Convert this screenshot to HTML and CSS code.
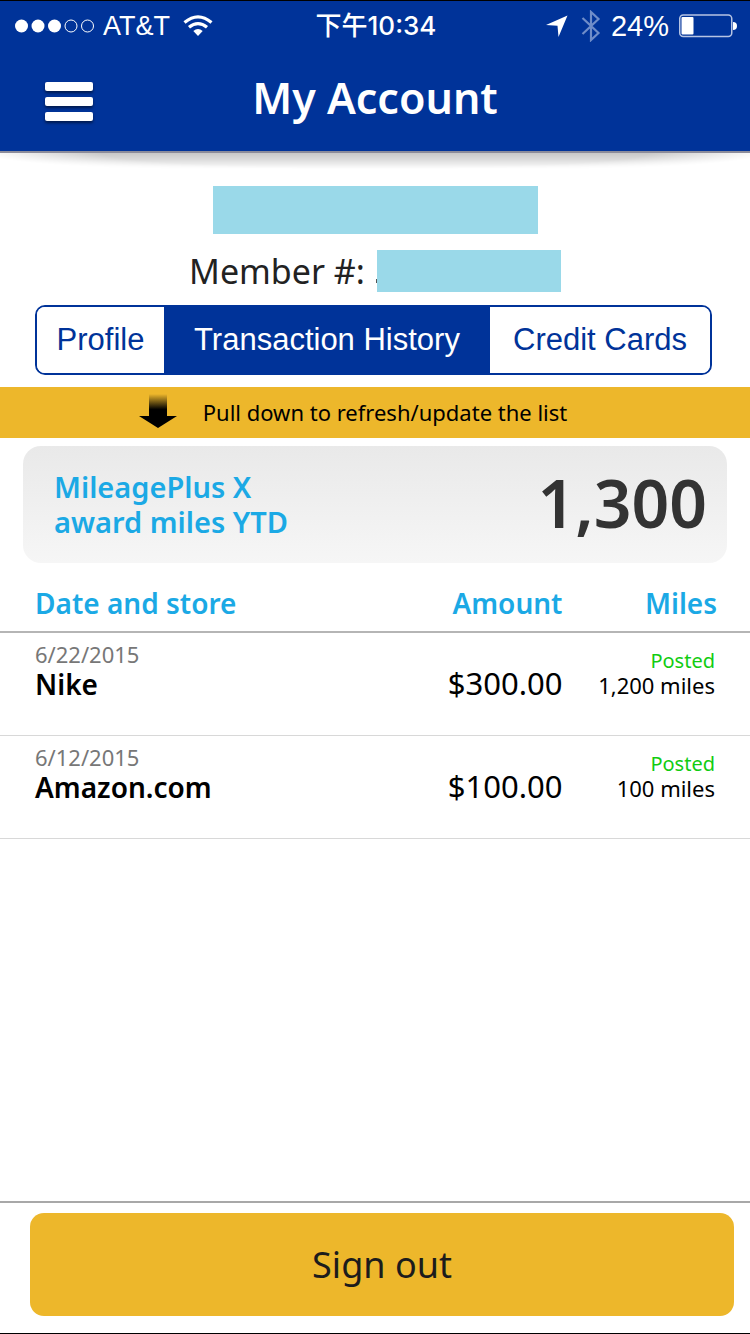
FILE: index.html
```html
<!DOCTYPE html>
<html lang="en">
<head>
<meta charset="utf-8">
<meta name="viewport" content="width=device-width, initial-scale=1">
<title>My Account</title>
<link rel="stylesheet" href="styles.css">
</head>
<body>
<div class="app">
  <header class="top">
    <div class="status">
      <div class="status-side">
        <svg class="signal" width="80" height="16" viewBox="0 0 80 16" aria-hidden="true">
          <g fill="#fff"><circle cx="6.500" cy="8" r="6.500"/><circle cx="23" cy="8" r="6.500"/><circle cx="39.500" cy="8" r="6.500"/></g>
          <g fill="none" stroke="#fff" stroke-width="1"><circle cx="56" cy="8" r="6"/><circle cx="72.500" cy="8" r="6"/></g>
        </svg>
        <span class="carrier">AT&amp;T</span>
        <svg width="30" height="22" viewBox="0 0 30 22" aria-hidden="true">
          <g fill="none" stroke="#fff" stroke-width="3.200"><path d="M1.500 7.500Q15-3.800 28.500 7.500"/><path d="M6 12.300Q15 5 24 12.300"/></g>
          <path d="M10.300 16Q15 12 19.700 16L15 21Z" fill="#fff"/>
        </svg>
      </div>
      <time class="clock">下午10:34</time>
      <div class="status-side status-right">
        <svg width="22" height="22" viewBox="0 0 22 22" aria-hidden="true"><path d="M21.500.5L12.500 22L11.500 10.800L0 10Z" fill="#fff"/></svg>
        <svg class="bluetooth" width="20" height="32" viewBox="0 0 20 32" aria-hidden="true"><path d="M1.500 8L17.500 23L10 30V2L17.500 9L1.500 24" fill="none" stroke="#6f8dc9" stroke-width="2.200"/></svg>
        <span class="percent">24%</span>
        <svg width="58" height="24" viewBox="0 0 58 24" aria-hidden="true">
          <rect x=".75" y="1" width="52" height="21.500" rx="3.500" fill="none" stroke="#b6c4e3" stroke-width="1.500"/>
          <rect x="2.500" y="3" width="12" height="17.500" rx="1" fill="#fff"/>
          <path d="M54 8Q58 8 58 12T54 16Z" fill="#fff"/>
        </svg>
      </div>
    </div>
    <div class="title-bar">
      <button class="menu" type="button" aria-label="Menu"><span></span><span></span><span></span></button>
      <h1 class="title">My Account</h1>
    </div>
  </header>
  <main class="main">
    <section class="member">
      <div class="mask mask-name"></div>
      <div class="member-line"><span>Member #:</span><span class="speck"></span><span class="mask mask-number"></span></div>
    </section>
    <nav class="tabs">
      <button class="tab" type="button">Profile</button>
      <button class="tab tab-active" type="button" aria-current="page">Transaction History</button>
      <button class="tab" type="button">Credit Cards</button>
    </nav>
    <div class="refresh">
      <svg width="38" height="36" viewBox="0 0 38 36" aria-hidden="true">
        <defs><linearGradient id="fade" x1="0" y1="0" x2="0" y2="1"><stop offset="0" stop-opacity="0"/><stop offset=".45"/></linearGradient></defs>
        <path d="M10 0H28V22H38L19 34L0 22H10Z" fill="url(#fade)"/>
      </svg>
      <span>Pull down to refresh/update the list</span>
    </div>
    <section class="summary">
      <p class="summary-label">MileagePlus X<br>award miles YTD</p>
      <p class="summary-value">1,300</p>
    </section>
    <table class="history">
      <thead><tr><th class="store">Date and store</th><th class="amount">Amount</th><th class="miles">Miles</th></tr></thead>
      <tbody>
        <tr><td class="store"><span class="date">6/22/2015</span><span class="name">Nike</span></td><td class="amount">$300.00</td><td class="miles"><span class="posted">Posted</span><span class="count">1,200 miles</span></td></tr>
        <tr><td class="store"><span class="date">6/12/2015</span><span class="name">Amazon.com</span></td><td class="amount">$100.00</td><td class="miles"><span class="posted">Posted</span><span class="count">100 miles</span></td></tr>
      </tbody>
    </table>
  </main>
  <footer class="footer"><button class="sign-out" type="button">Sign out</button></footer>
</div>
</body>
</html>
```
FILE: styles.css
```css
* { box-sizing: border-box; }
body { margin: 0; background: #fff; color: #000; font-family: "Noto Sans", "Noto Sans CJK TC", sans-serif; }
button { font: inherit; cursor: pointer; }
.app { min-height: 100vh; display: flex; flex-direction: column; border-top: 1px solid #000; border-bottom: 1px solid #000; }

.top { position: relative; background: #039; color: #fff; border-bottom: 2px solid #8c8c9a; }
.top::after { content: ""; position: absolute; left: 0; right: 0; top: calc(100% + 2px); height: 16px; background: linear-gradient(rgba(0,0,0,.22), rgba(0,0,0,.14) 40%, transparent); -webkit-mask-image: radial-gradient(52% 130% at 50% 0, #000 70%, transparent); mask-image: radial-gradient(52% 130% at 50% 0, #000 70%, transparent); }
.status { height: 50px; padding: 0 13px 0 15px; display: grid; grid-template-columns: 1fr auto 1fr; align-items: center; font-family: "Liberation Sans", "Noto Sans CJK TC", sans-serif; font-size: 29px; line-height: 32px; }
.status-side { display: flex; align-items: center; gap: 8px; }
.status-side svg { flex: none; }
.carrier { margin-right: 5px; font-size: 27px; }
.status-right { justify-content: flex-end; gap: 10px; }
.bluetooth { margin-left: 3px; }
.clock { font-family: "Inter", "Noto Sans CJK TC", sans-serif; font-size: 26px; font-weight: 500; }
.title-bar { height: 100px; display: grid; grid-template-columns: 1fr auto 1fr; align-items: center; padding: 0 45px 4px; }
.menu { width: 48px; padding: 4px 0 0; border: 0; background: none; display: grid; gap: 6px; }
.menu span { height: 9px; border-radius: 2px; background: #fff; box-shadow: 0 2px 3px rgba(0,0,0,.5); }
.title { margin: 0; padding-bottom: 2px; font-size: 43px; line-height: 60px; font-weight: 600; }

.main { flex: 1; }
.member { padding-top: 33px; display: flex; flex-direction: column; align-items: center; gap: 16px; }
.mask { background: #9ad9e9; }
.mask-name { width: 325px; height: 48px; }
.member-line { display: flex; align-items: center; font-size: 34px; line-height: 42px; color: #222; }
.mask-number { width: 184px; height: 42px; }
.speck { width: 1px; height: 4px; margin: 20px 0 0 11px; background: #555; }
.tabs { margin: 13px 38px 12px 35px; height: 70px; border: 2px solid #039; border-radius: 10px; display: grid; grid-template-columns: 127fr 326fr 220fr; overflow: hidden; }
.tab { border: 0; padding: 0; background: #fff; color: #039; font-family: "Liberation Sans", sans-serif; font-size: 31px; white-space: nowrap; }
.tab-active { background: #039; color: #fff; }
.refresh { height: 51px; padding: 0 44px 2px 0; background: #edb72b; display: flex; align-items: center; justify-content: center; gap: 26px; font-size: 22px; line-height: 30px; }
.summary { margin: 8px 23px 0; height: 117px; padding: 0 20px 2px 31px; border-radius: 18px; background: linear-gradient(#e9e9e9, #f6f6f6); display: flex; align-items: center; justify-content: space-between; }
.summary p { margin: 0; font-weight: 600; }
.summary .summary-label { color: #1ba9e5; font-size: 29px; line-height: 35px; }
.summary .summary-value { color: #333; font-size: 66px; line-height: 80px; padding-bottom: 4px; }

.history { width: 100%; border-collapse: separate; border-spacing: 0; table-layout: fixed; }
.history th { height: 70px; padding: 12px 0 0; color: #1ba9e5; font-size: 28px; line-height: 36px; font-weight: 600; border-bottom: 2px solid #b5b5b5; }
.history td { height: 103px; padding: 0; border-bottom: 1px solid #d8d8d8; vertical-align: top; }
.history .store { width: 50%; padding-left: 35px; text-align: left; }
.history .amount { width: 25%; text-align: right; }
.history .miles { padding-right: 35px; text-align: right; }
.history th.miles { padding-right: 33px; }
.history td span { display: block; }
.history td.store { padding-top: 8px; }
.history td.amount { padding-top: 32px; font-size: 31px; line-height: 36px; }
.history td.miles { padding-top: 16px; }
.date { color: #777; font-size: 22px; line-height: 26px; }
.name { font-size: 28px; line-height: 34px; font-weight: 600; }
.posted { color: #1c1; font-size: 20px; line-height: 24px; }
.count { font-size: 22px; line-height: 24px; }

.footer { border-top: 2px solid #a8a8a8; padding: 10px 16px 17px 30px; }
.sign-out { display: block; width: 100%; height: 103px; border: 0; border-radius: 14px; background: #edb72b; color: #1c1c1c; font-size: 36px; line-height: 50px; }
```
